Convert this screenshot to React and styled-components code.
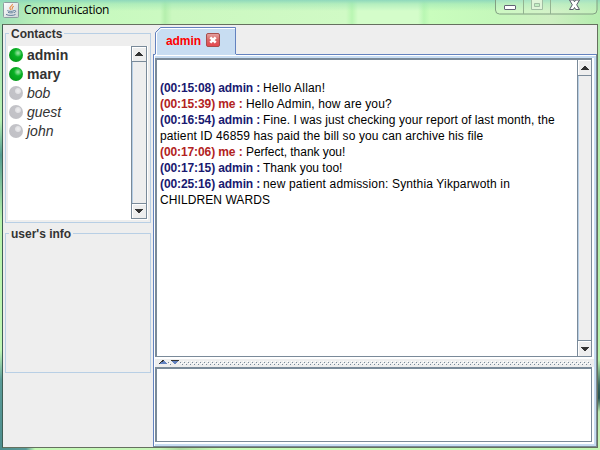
import React from "react";
import styled, { createGlobalStyle } from "styled-components";

const GlobalStyle = createGlobalStyle`
  * { box-sizing: border-box; }
  body { margin: 0; overflow: hidden; font-family: "Liberation Sans", Arial, sans-serif; }
`;

const Window = styled.div`
  width: 600px;
  height: 450px;
  padding: 0 2px 2px;
  display: flex;
  flex-direction: column;
  background:
    linear-gradient(#8fd8bc 0, rgba(150, 225, 180, 0.5) 4px, transparent 11px) 0 0 / 100% 24px no-repeat,
    linear-gradient(90deg, #9fe0b9 0, #b4ecb8 28px, #c5f9bd 60px, #cbfac1 160px, #b5efad 165px, #cbf8c0 172px,
      #d0fac5 346px, #b9f6b2 352px, #d4fdca 358px, #d4fdca 418px, #b9f7b3 424px, #c9fdbd 430px, #c5f8bb 495px, #ceefc2 550px, #b5edaf 600px) 0 0 / 100% 24px no-repeat,
    linear-gradient(#a4dfb5 0, #b7f2b2 120px, #559d91 155px, #b8f4ab 220px, #c0f7b4 350px, #5a9b98 380px, #4d8d8d 450px) 0 0 / 2px 100% no-repeat,
    linear-gradient(#b5eaaf 0, #b6f3ab 360px, #38645f 385px, #255252 398px, #bcebb3 412px, #c7f5b6 450px) 598px 0 / 2px 100% no-repeat,
    linear-gradient(90deg, #4d8d8d 0, #5b9b98 26px, #c4fab5 35px, #c7f6b8 160px, #aedca1 180px, #caffba 220px, #c3f8b5 600px);
`;

const TitleBar = styled.header`
  height: 24px;
  flex: none;
  display: flex;
  align-items: flex-start;
  padding-left: 1px;
`;

const JavaIcon = styled.svg`
  width: 16px;
  height: 16px;
  margin-top: 2px;
  flex: none;
`;

const Title = styled.h1`
  margin: 2px 0 0 5px;
  font: 12px/16px "Open Sans", "Noto Sans", sans-serif;
  letter-spacing: ${(p) => p.$spacing};
  color: #000;
  white-space: nowrap;
`;

const Caption = styled.svg`
  width: 104px;
  height: 16px;
  margin-left: auto;
  flex: none;
`;

const Client = styled.main`
  flex: 1;
  min-height: 0;
  display: flex;
  background: #eeeeee;
  border: 1px solid #65705f;
  border-left-color: #3e5e55;
`;

const Sidebar = styled.aside`
  width: 150px;
  flex: none;
  padding: 8px 2px 0;
`;

const Group = styled.section`
  width: 146px;
  height: ${(p) => p.$height}px;
  margin-bottom: 10px;
  border: 1px solid #b8cfe5;
  padding: 0 2px 2px;
  display: flex;
  flex-direction: column;
`;

const Legend = styled.h2`
  align-self: flex-start;
  margin: -8px 0 0 1px;
  padding: 0 2px;
  height: 16px;
  background: #eeeeee;
  font: bold 12px/16px "Liberation Sans", Arial, sans-serif;
  color: #333;
`;

const ListPane = styled.div`
  height: 174px;
  margin-top: 4px;
  padding: 0 1px 1px 0;
  display: flex;
  background: #fff;
`;

const Contacts = styled.ul`
  flex: 1;
  margin: 0;
  padding: 0;
  list-style: none;
`;

const Contact = styled.li`
  height: 19px;
  padding-left: 1px;
  display: flex;
  align-items: flex-start;
  gap: 4px;
  color: #333;
  font-size: 14px;
  line-height: 19px;
  font-weight: ${(p) => (p.$online ? "bold" : "normal")};
  font-style: ${(p) => (p.$online ? "normal" : "italic")};
`;

const Dot = styled.span`
  width: 14px;
  height: 14px;
  margin-top: 2px;
  border-radius: 50%;
  background: ${(p) =>
    p.$online
      ? "radial-gradient(circle at 9px 5px, #9be8a6 0, #5bd06c 2px, #08b024 4px, #06a81f 6px, #069b1b 9px)"
      : "radial-gradient(circle at 9px 5px, #eeeef0 0, #e1e1e4 2.5px, #c3c3c8 3.5px, #c1c1c6 9px)"};
`;

const ScrollTrack = styled.div`
  width: ${(p) => (p.$framed ? 14 : 16)}px;
  flex: none;
  display: flex;
  flex-direction: column;
  justify-content: space-between;
  background: #eeeeee;
  border: 0 solid #7a8a99;
  border-width: ${(p) => (p.$framed ? "0 0 0 1px" : "1px 1px 1px 1px")};
  box-shadow: inset 1px 0 #b8cfe5;
`;

const ScrollButton = styled.div`
  height: ${(p) => (p.$tall ? 16 : 15)}px;
  display: flex;
  align-items: center;
  justify-content: center;
  background: #eeeeee;
  border: 0 solid #7a8a99;
  border-width: ${(p) => (p.$down ? "1px 0 0" : "0 0 1px")};
  box-shadow: inset 1px 1px #fff;
`;

const Arrow = styled.svg`
  width: 8px;
  height: 4px;
  transform: ${(p) => (p.$down ? "rotate(180deg)" : "none")};
`;

const Chat = styled.section`
  flex: 1;
  min-width: 0;
  padding-top: 2px;
  display: flex;
  flex-direction: column;
`;

const TabSvg = styled.svg`
  width: 84px;
  height: 28px;
  display: block;
  flex: none;
  z-index: 1;
`;

const TabBody = styled.div`
  flex: 1;
  min-height: 0;
  margin-top: -1px;
  display: flex;
  flex-direction: column;
  background: #c8ddf2;
  border-left: 1px solid #6382bf;
  border-top: 1px solid #6382bf;
  border-right: 1px solid #7a8a99;
  border-bottom: 1px solid #7a8a99;
  box-shadow: inset 1px 1px #fff;
  padding: 3px 2px 2px 1px;
`;

const Pane = styled.div`
  height: ${(p) => p.$height}px;
  flex: none;
  background: #fff;
  border-right: 2px solid #fff;
  border-bottom: 2px solid #fff;
`;

const PaneFrame = styled.div`
  height: 100%;
  display: flex;
  border: 1px solid #7a8a99;
  border-top-width: 2px;
  border-left-width: 2px;
`;

const Messages = styled.div`
  flex: 1;
  padding: 20px 0 0 3px;
  font-size: 12px;
  line-height: 16px;
  color: #000;
`;

const Line = styled.div`
  height: 16px;
  white-space: nowrap;
  letter-spacing: ${(p) => p.$spacing}px;
`;

const Sender = styled.b`
  display: inline-block;
  width: ${(p) => (p.$me ? 86 : 103)}px;
  letter-spacing: -0.1px;
  color: ${(p) => (p.$me ? "#b22222" : "#191970")};
`;

const Divider = styled.svg`
  width: 439px;
  height: 8px;
  flex: none;
  display: block;
`;

const contacts = [
  ["admin", true],
  ["mary", true],
  ["bob", false],
  ["guest", false],
  ["john", false],
];

/* Each line of text is paired with its letter spacing. */
const messages = [
  { time: "00:15:08", from: "admin", lines: [["Hello Allan!", 0.18]] },
  { time: "00:15:39", from: "me", lines: [["Hello Admin, how are you?", 0.12]] },
  {
    time: "00:16:54",
    from: "admin",
    lines: [
      ["Fine. I was just checking your report of last month, the", 0.075],
      ["patient ID 46859 has paid the bill so you can archive his file", 0.125],
    ],
  },
  { time: "00:17:06", from: "me", lines: [["Perfect, thank you!", -0.04]] },
  { time: "00:17:15", from: "admin", lines: [["Thank you too!", 0]] },
  {
    time: "00:25:16",
    from: "admin",
    lines: [["new patient admission: Synthia Yikparwoth in", 0.155], ["CHILDREN WARDS", 0.08]],
  },
];

function ScrollArrow({ down }) {
  return (
    <Arrow $down={down} viewBox="0 0 8 4" shapeRendering="crispEdges">
      <path d="M3 0h2v1h1v1h1v1h1v1H0V3h1V2h1V1h1z" fill="#333" />
    </Arrow>
  );
}

function ScrollBar({ framed }) {
  return (
    <ScrollTrack $framed={framed}>
      <ScrollButton $tall={framed}><ScrollArrow /></ScrollButton>
      <ScrollButton $tall={framed} $down><ScrollArrow down /></ScrollButton>
    </ScrollTrack>
  );
}

function Java() {
  return (
    <JavaIcon viewBox="0 0 16 16">
      <defs>
        <linearGradient id="tile" x1="0" y1="0" x2="1" y2="1">
          <stop offset="0" stopColor="#fff" />
          <stop offset="1" stopColor="#cdd3d6" />
        </linearGradient>
      </defs>
      <rect x=".5" y=".5" width="15" height="15" rx="1" fill="url(#tile)" stroke="#8c9da0" />
      <path d="M9.4 2c.5 2-3.5 2.5-2.4 4.7L8 8M10.8 4.2C8.5 5 9.7 6 9 7.5" fill="none" stroke="#e58a42" strokeWidth="1.2" />
      <path d="M4.3 8.6c1.5 1 5.5 1 6.7 0M5 10.3c1.4.8 4.4.8 5.5 0M3 12.4c2 1.4 8 1.3 9.5 0M11.2 8.5c2-.5 2 1.8-.2 2.1" fill="none" stroke="#5f7f9b" />
    </JavaIcon>
  );
}

function WindowButtons() {
  return (
    <Caption viewBox="494 0 104 16">
      <path d="M495.5 0v10q0 4 4 4H593q4 0 4-4V0" fill="rgba(225,250,215,.28)" stroke="#82a083" />
      <path d="M523.5 0v14M550.5 0v14" stroke="#93b391" />
      <rect x="504.5" y="5.5" width="11" height="4" rx=".5" fill="#fff" stroke="#626274" />
      <path d="M531.5 0v9.5h11V0M534.5 3.5h5v3h-5z" fill="#dff5d9" stroke="#a0bda2" />
      <path d="M569.5 0h4l1 1.8 1-1.8h4l-2.8 4.8 2.8 4.7h-3.8l-1.2-2-1.2 2h-3.8l2.8-4.7z" fill="#fff" stroke="#585b69" />
    </Caption>
  );
}

function Tab() {
  return (
    <TabSvg viewBox="153 27 84 28">
      <path d="M155 55V33l6-6h75v28z" fill="#c8ddf2" />
      <path d="M155.5 54V32.5l5-5h75V54" fill="none" stroke="#6382bf" />
      <path d="M156.5 55V33l4.5-4.5h74" fill="none" stroke="#fff" />
      <text x="166" y="45" fill="#f00" fontFamily="Liberation Sans, Arial, sans-serif" fontWeight="bold" fontSize="12" textLength="35">admin</text>
      <defs>
        <linearGradient id="close" x1="0" y1="0" x2="0" y2="1">
          <stop offset="0" stopColor="#e5a5a4" />
          <stop offset=".5" stopColor="#d96565" />
          <stop offset="1" stopColor="#e8454d" />
        </linearGradient>
      </defs>
      <rect x="206.5" y="33.5" width="13" height="13" rx="1.5" fill="url(#close)" stroke="#a84e4c" />
      <path d="M210.3 37.3l5.4 5.4M215.7 37.3l-5.4 5.4" stroke="#fff" strokeWidth="2.6" />
    </TabSvg>
  );
}

function SplitDivider() {
  return (
    <Divider viewBox="155 359 439 8" shapeRendering="crispEdges">
      <defs>
        <pattern id="bumps" x="179" y="361" width="4" height="4" patternUnits="userSpaceOnUse">
          <path d="M0 0h1v1H0zM2 2h1v1H2z" fill="#fff" />
          <path d="M1 1h1v1H1zM3 3h1v1H3z" fill="#7a8a99" />
        </pattern>
      </defs>
      <path d="M155 359h439v8H155z" fill="#eee" />
      <path d="M167 361h424v4H167z" fill="url(#bumps)" />
      <path d="M158 360h10v5h-10zM171 360h9v5h-9z" fill="#eee" />
      <path d="M162 360h2v1h1v1h1v1h1v1h-8v-1h1v-1h1v-1h1z" fill="#6382bf" />
      <path d="M162 360h2v1h-1v1h-2v1h-1v1h-1v-1h1v-1h1v-1h1z" fill="#333" />
      <path d="M171 360h8v1h-1v1h-1v1h-1v1h-2v-1h-1v-1h-1v-1h-1z" fill="#6382bf" />
      <path d="M171 360h8v1h-8z" fill="#333" />
    </Divider>
  );
}

export default function App() {
  return (
    <>
      <GlobalStyle />
      <Window>
        <TitleBar>
          <Java />
          <Title $spacing="-0.3px">Communication</Title>
          <WindowButtons />
        </TitleBar>
        <Client>
          <Sidebar>
            <Group $height={190}>
              <Legend>Contacts</Legend>
              <ListPane>
                <Contacts>
                  {contacts.map(([name, online]) => (
                    <Contact key={name} $online={online}>
                      <Dot $online={online} />
                      {name}
                    </Contact>
                  ))}
                </Contacts>
                <ScrollBar />
              </ListPane>
            </Group>
            <Group $height={140}>
              <Legend>user's info</Legend>
            </Group>
          </Sidebar>
          <Chat>
            <Tab />
            <TabBody>
              <Pane $height={301}>
                <PaneFrame>
                  <Messages>
                    {messages.map((m) =>
                      m.lines.map(([line, spacing], i) => (
                        <Line key={m.time + i} $spacing={spacing}>
                          {i === 0 && <Sender $me={m.from === "me"}>{`(${m.time}) ${m.from} :`}</Sender>}
                          {line}
                        </Line>
                      ))
                    )}
                  </Messages>
                  <ScrollBar framed />
                </PaneFrame>
              </Pane>
              <SplitDivider />
              <Pane $height={77}>
                <PaneFrame />
              </Pane>
            </TabBody>
          </Chat>
        </Client>
      </Window>
    </>
  );
}
